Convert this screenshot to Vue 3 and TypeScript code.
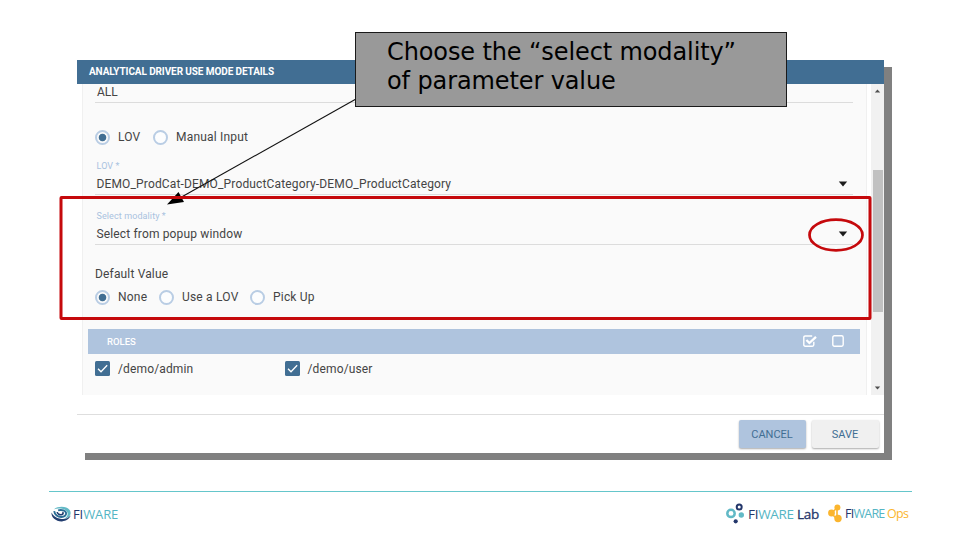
<script setup lang="ts">
import { ref } from 'vue'

interface SelectField { label: string; value: string }

const fields: SelectField[] = [
  { label: 'LOV *', value: 'DEMO_ProdCat-DEMO_ProductCategory-DEMO_ProductCategory' },
  { label: 'Select modality *', value: 'Select from popup window' },
]
const inputType = ref('LOV')
const defaultValue = ref('None')
const roles = ['/demo/admin', '/demo/user']
</script>

<template>
  <main class="slide">
    <section class="dialog">
      <header class="title"><span>ANALYTICAL DRIVER USE MODE DETAILS</span></header>
      <div class="body">
        <div class="panel">
          <div class="all"><span>ALL</span></div>
          <div class="radios first">
            <label class="radio lov" @click="inputType = 'LOV'"><i :class="{ on: inputType === 'LOV' }"></i><span>LOV</span></label>
            <label class="radio" @click="inputType = 'Manual'"><i :class="{ on: inputType === 'Manual' }"></i><span>Manual Input</span></label>
          </div>
          <div v-for="f in fields" :key="f.label" class="field">
            <div class="label"><span>{{ f.label }}</span></div>
            <div class="value"><span>{{ f.value }}</span><svg width="10" height="6" viewBox="0 0 10 6"><path d="M0.8 0.5h8.4L5 5.5z" fill="#1c1c1c" /></svg></div>
          </div>
          <div class="default"><span>Default Value</span></div>
          <div class="radios">
            <label class="radio none" @click="defaultValue = 'None'"><i :class="{ on: defaultValue === 'None' }"></i><span>None</span></label>
            <label class="radio use" @click="defaultValue = 'LOV'"><i :class="{ on: defaultValue === 'LOV' }"></i><span>Use a LOV</span></label>
            <label class="radio" @click="defaultValue = 'Pick'"><i :class="{ on: defaultValue === 'Pick' }"></i><span>Pick Up</span></label>
          </div>
          <div class="rolebar">
            <span>ROLES</span>
            <svg width="14" height="12" viewBox="0 0 14 12" fill="none" stroke="#fff"><path d="M10.8 6.8v3q0 1.4-1.4 1.4H2.2Q.8 11.2.8 9.8V2.4Q.8 1 2.2 1h7" stroke-width="1.4" /><path d="M3.4 5l3 3L13 1.8" stroke-width="2.3" /></svg>
            <svg class="empty" width="12" height="12" viewBox="0 0 12 12" fill="none" stroke="#fff" stroke-width="1.4"><rect x=".8" y=".8" width="10.4" height="10.4" rx="1.6" /></svg>
          </div>
          <div class="roles">
            <label v-for="r in roles" :key="r"><svg width="15" height="15" viewBox="0 0 15 15"><rect width="15" height="15" rx="1.5" fill="#416e93" /><path d="M3 7.8l3 3L12.2 4.3" fill="none" stroke="#fff" stroke-width="1.3" /></svg><span>{{ r }}</span></label>
          </div>
        </div>
        <div class="scrollbar">
          <svg width="7" height="4" viewBox="0 0 7 4"><path d="M.8 3.6h5.4L3.5.5z" fill="#505050" /></svg>
          <div class="thumb"></div>
          <svg class="down" width="7" height="4" viewBox="0 0 7 4"><path d="M.8.4h5.4L3.5 3.5z" fill="#505050" /></svg>
        </div>
      </div>
      <footer class="actions">
        <button class="cancel">CANCEL</button>
        <button>SAVE</button>
      </footer>
    </section>

    <footer class="brands">
      <svg class="swirl" width="21" height="16" viewBox="0 0 21 16" fill="none">
        <path d="M3 3.2C8-.5 17 .3 19.2 5c1.7 4-2 7.6-6 7.5 3.2-1.2 4.5-4.4 2.6-7C13.6 2.6 7.8 2 3 3.2z" fill="#62b9c6" />
        <path d="M.5 6.5C0 11.500 5 15.600 11 15.400c4.200-.2 7.500-2.700 8.600-5.800-2.800 3.200-6.600 4-10.200 3.200C4.800 12 2 9.600.5 6.500z" fill="#233e70" />
        <path d="M3.2 5.200c.4 3.600 3.700 6 7.300 5.800 3-.1 4.900-2 4.600-4-.4-2.400-4.400-3.600-8-2.600" stroke="#2b6e96" stroke-width="1.9" />
        <path d="M6.2 6c.3 2 2.400 3 4.200 2.700 1.800-.3 2.300-1.700 1-2.500" stroke="#233e70" stroke-width="1.6" />
      </svg>
      <div class="word fiware"><span><b>FI</b>WARE</span></div>
      <svg class="lab" width="19" height="21" viewBox="0 0 19 21" fill="none">
        <circle cx="5" cy="10.4" r="3.7" stroke="#62b9c6" stroke-width="2.5" />
        <circle cx="13.2" cy="4" r="2.5" stroke="#24376b" stroke-width="2" />
        <circle cx="15.3" cy="12" r="2.7" fill="#62b9c6" /><circle cx="9.7" cy="18.3" r="2.1" fill="#24376b" />
      </svg>
      <div class="word labtext"><span><b>FI</b>WARE <b>Lab</b></span></div>
      <svg class="ops" width="14" height="19" viewBox="0 0 14 19" fill="#fbb52e">
        <circle cx="9.4" cy="3.500" r="3" /><circle cx="3.500" cy="9" r="3.4" /><circle cx="10" cy="14.500" r="3.7" />
        <path d="M4 8.500L9 4v11L4 10" fill="none" stroke="#fbb52e" stroke-width="1.6" />
      </svg>
      <div class="word opstext"><span><b>FI</b>WARE <em>Ops</em></span></div>
    </footer>

    <svg class="marks" width="960" height="540" viewBox="0 0 960 540" fill="none">
      <path d="M356 99L178 199" stroke="#111" stroke-width="1.1" />
      <path d="M167 204.500L178.500 192l5.500 10z" fill="#000" />
      <rect x="61" y="197.500" width="809" height="121" stroke="#c5090c" stroke-width="3" rx=".5" />
      <ellipse cx="836" cy="235" rx="26.500" ry="15.300" stroke="#c5090c" stroke-width="2.7" />
    </svg>
    <aside class="callout"><span>Choose the “select modality”</span><span>of parameter value</span></aside>
  </main>
</template>

<style>
body { margin: 0; background: #fff; }
</style>
<style scoped>
* { box-sizing: border-box; }
.slide { position: relative; width: 960px; height: 540px; padding: 60px 0 0 77px; background: #fff; overflow: hidden; font-family: Roboto, sans-serif; font-size: 12px; color: #444; }
span { white-space: nowrap; }
.dialog { width: 807px; height: 393px; background: #fff; box-shadow: 8px 7px 0 #808080; }
.title { height: 24px; padding-left: 12px; background: #416e93; color: #fff; font-weight: 700; font-size: 10px; line-height: 24px; }
.title span { letter-spacing: -.1px; }
.body { display: flex; justify-content: space-between; height: 311px; padding-left: 5px; }
.panel { width: 785px; height: 311px; background: #fafafa; border: solid #f0f0f0; border-width: 0 1px; padding: 0 6px 0 5px; display: flex; flex-direction: column; }
.all { height: 19px; margin: 0 7px; padding-left: 2px; border-bottom: 1px solid #dcdcdc; line-height: 17px; }
.radios { display: flex; height: 28px; align-items: center; padding-left: 7px; margin-top: -1px; }
.radios.first { margin-top: 20px; margin-bottom: 9px; }
.radio { display: flex; align-items: center; margin-right: 12px; }
.radio i { width: 15px; height: 15px; margin-right: 8px; border: 2px solid #b9cde4; border-radius: 50%; background: #fcfdfe; flex: none; }
.radio i.on { background: radial-gradient(circle, #416e93 0 3.4px, #fafafa 4.2px); }
.radio span { letter-spacing: .2px; }
.lov { width: 46px; }
.none { width: 52px; }
.use { width: 79px; }
.field { height: 35px; margin: 0 7px 15px; }
.label { height: 12px; padding-left: 1.5px; font-size: 9px; line-height: 13px; color: #a9c2df; letter-spacing: .1px; }
.value { height: 23px; padding: 1px 5px 0 1.5px; border-bottom: 1px solid #dcdcdc; line-height: 22px; display: flex; justify-content: space-between; align-items: center; }
.value span { letter-spacing: .15px; padding-top: 1px; }
.default { height: 20px; margin-top: 4px; padding-left: 7px; line-height: 20px; letter-spacing: .16px; }
.rolebar { display: flex; align-items: center; height: 25px; margin-top: 18px; padding: 0 16px 0 19px; background: #afc4de; color: #fff; font-size: 9.5px; font-weight: 500; }
.rolebar span { flex: 1; }
.rolebar svg { position: relative; top: -1px; }
.empty { margin-left: 15px; }
.roles { display: flex; padding: 7px 0 0 7px; }
.roles label { display: flex; align-items: center; width: 189.5px; height: 15px; gap: 8px; }
.roles span { letter-spacing: .14px; }
.scrollbar { width: 13px; height: 311px; background: #f1f1f1; display: flex; flex-direction: column; align-items: center; padding-top: 5px; }
.thumb { width: 10px; height: 142px; margin-top: 77px; background: #c1c1c1; }
.down { margin-top: 74px; }
.actions { display: flex; gap: 6px; justify-content: flex-end; margin-top: 19px; border-top: 1px solid #dedede; padding: 5px 5px 0 0; height: 39px; }
.actions button { width: 67px; height: 28px; border: 0; border-radius: 2px; padding: 0 1px 0 0; background: #f0f0f0; color: #416e93; font: 11px Roboto, sans-serif; box-shadow: 0 1px 2px #aaa; }
.actions .cancel { background: #afc4de; }
.brands { display: flex; align-items: center; width: 863px; height: 44px; margin: 38px 0 0 -28px; padding-left: 2px; border-top: 1px solid #65c6cb; }
.word { font: 14px/20px "Open Sans", sans-serif; color: #55b5c4; }
.word b { color: #24376b; font-weight: 400; }
.word em { color: #fbb52e; font-style: normal; }
.fiware { width: 50px; margin-left: 1px; }
.fiware span { letter-spacing: -.1px; font-size: 13px; }
.lab { margin-left: 603px; }
.labtext { width: 76px; margin-left: 3px; }
.labtext span { font-size: 13.5px; letter-spacing: -.3px; }
.labtext b:last-child { -webkit-text-stroke: .3px #24376b; }
.ops { margin-left: 4px; }
.opstext { margin-left: 3px; }
.opstext span { font-size: 12.5px; letter-spacing: -.75px; }
.marks { position: absolute; left: 0; top: 0; pointer-events: none; }
.callout { position: absolute; left: 355px; top: 32px; width: 432px; height: 75px; padding: 5px 0 0 31px; background: #999; border: 1px solid #1a1a1a; color: #000; font: 24px/29px "DejaVu Sans", sans-serif; letter-spacing: -.11px; display: flex; flex-direction: column; align-items: flex-start; }
</style>
